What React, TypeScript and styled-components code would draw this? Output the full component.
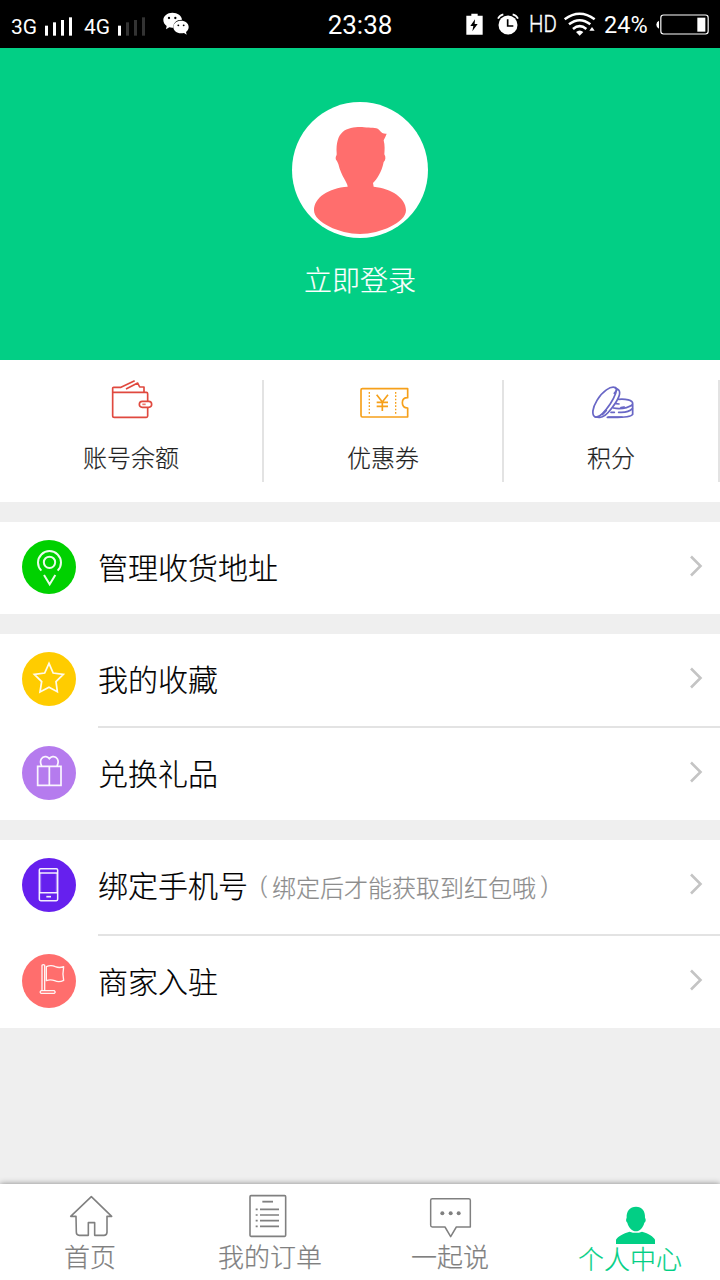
import React from 'react';
import styled, { createGlobalStyle } from 'styled-components';

const GlobalStyle = createGlobalStyle`
  *, *::before, *::after { box-sizing: border-box; }
  body {
    margin: 0;
    background: #efefef;
    font-family: 'Noto Sans CJK SC', 'Noto Sans', sans-serif;
    font-weight: 300;
    -webkit-text-stroke: 0.2px currentColor;
  }
  svg { display: block; flex: none; overflow: visible; }
`;

const Screen = styled.div`
  width: 720px;
  height: 1280px;
  display: flex;
  flex-direction: column;
  background: #efefef;
  overflow: hidden;
`;

/* status bar */
const StatusBar = styled.header`
  height: 48px;
  flex: none;
  display: grid;
  grid-template-columns: 1fr auto 1fr;
  align-items: center;
  padding: 0 11px;
  background: #000;
  color: #fff;
  font-family: Roboto, sans-serif;
  font-weight: 400;
  -webkit-text-stroke: 0;
`;

const StatusGroup = styled.div<{ $end?: boolean }>`
  display: flex;
  align-items: center;
  height: 48px;
  justify-content: ${(p) => (p.$end ? 'flex-end' : 'flex-start')};
`;

const StatusText = styled.span<{ $size: number; $width: number; $top?: number }>`
  flex: none;
  width: ${(p) => p.$width}px;
  font-size: ${(p) => p.$size}px;
  line-height: 48px;
  padding-top: ${(p) => p.$top ?? 0}px;
  white-space: nowrap;
`;

const HdMark = styled(StatusText)`
  font-weight: 300;
  -webkit-text-stroke: 0.4px #fff;
  transform: scaleX(0.85);
  transform-origin: left center;
`;

const SignalSlot = styled.span`
  width: 39px;
  padding-top: 4px;
`;

const IconSlot = styled.span<{ $before?: number; $after?: number }>`
  margin-left: ${(p) => p.$before ?? 0}px;
  margin-right: ${(p) => p.$after ?? 0}px;
`;

const Clock = styled.time`
  font-size: 26px;
  line-height: 45px;
  padding-top: 3px;
`;

/* profile header */
const Profile = styled.section`
  height: 312px;
  flex: none;
  display: flex;
  flex-direction: column;
  align-items: center;
  padding-top: 54px;
  background: #02cf85;
`;

const LoginLink = styled.span`
  margin-top: 21px;
  font-size: 28px;
  line-height: 40px;
  color: #fff;
`;

/* account summary */
const Stats = styled.section`
  height: 142px;
  flex: none;
  display: grid;
  grid-template-columns: 264px 240px 216px;
  padding: 20px 0;
  background: #fff;
`;

const Stat = styled.div`
  display: flex;
  flex-direction: column;
  align-items: center;
  border-right: 2px solid #e3e3e3;
  height: 102px;

  svg { margin-top: -2px; }
`;

const StatLabel = styled.span`
  margin-top: 19px;
  font-size: 24px;
  line-height: 36px;
  color: #222;
`;

/* menu */
const Group = styled.section`
  flex: none;
  margin-top: 20px;
  background: #fff;
`;

const Row = styled.div<{ $height?: number }>`
  height: ${(p) => p.$height ?? 92}px;
  display: flex;
  align-items: flex-start;
  padding: 18px 17px 0 22px;
`;

const Divider = styled.div`
  height: 2px;
  margin-left: 98px;
  background: #e3e3e3;
`;

const Label = styled.span`
  margin-left: 22px;
  font-size: 30px;
  line-height: 52px;
  color: #000;
`;

const Hint = styled.span`
  display: flex;
  font-size: 24px;
  line-height: 58px;
  color: #8c8c8c;
`;

const Paren = styled.span<{ $open?: boolean }>`
  width: 24px;
  padding: ${(p) => (p.$open ? '0 5px 0 0' : '0 0 0 5px')};
  text-align: ${(p) => (p.$open ? 'right' : 'left')};
  font-family: Roboto, sans-serif;
  font-size: 22px;
  line-height: 56px;
`;

const ChevronBox = styled.span`
  margin: 15px 0 0 auto;
`;

/* tab bar */
const TabBar = styled.nav`
  height: 96px;
  flex: none;
  margin-top: auto;
  display: grid;
  grid-template-columns: repeat(4, 180px);
  background: #fff;
  box-shadow: 0 0 6px rgba(0, 0, 0, 0.45);
`;

const Tab = styled.div<{ $active?: boolean }>`
  display: flex;
  flex-direction: column;
  align-items: center;
  padding-top: 9px;
  color: ${(p) => (p.$active ? '#02cf85' : '#808080')};
`;

const TabLabel = styled.span<{ $drop?: number }>`
  margin-top: ${(p) => -8 + (p.$drop ?? 0)}px;
  font-size: 26px;
  line-height: 38px;
`;

const Signal = ({ active }: { active: number }) => (
  <svg width="28" height="19" viewBox="0 0 84 57">
    {[30, 40, 47, 55].map((h, i) => (
      <rect key={h} x={i * 24} y={56 - h} width="9" height={h} fill={i < active ? '#fff' : '#333'} />
    ))}
  </svg>
);

const WeChat = () => (
  <svg width="26" height="24" viewBox="488 37 78 72">
    <path
      d="M516 39c-15 0-27 10-27 22 0 8 4 14 10 18l-2 10 10-6c4 1 8 2 12 1-1-14 9-24 26-24-1-12-13-21-29-21z"
      fill="#fff"
    />
    <path
      d="M542 63c-13 0-23 8-23 19s10 19 23 19c3 0 6 0 9-1l8 5-2-8c5-4 8-9 8-15 0-11-10-19-23-19z"
      fill="#fff"
    />
    <g fill="#000">
      <circle cx="506" cy="55" r="3.5" />
      <circle cx="525" cy="55" r="3.5" />
      <circle cx="534" cy="77" r="2.8" />
      <circle cx="550" cy="77" r="2.8" />
    </g>
  </svg>
);

const BatterySaver = () => (
  <svg width="17" height="22" viewBox="437 40 51 66">
    <path d="M438 48h15v-6h19v6h15v57h-49z" fill="#fff" />
    <path d="M464 59l-14 20h9l-3 16 16-22h-9z" fill="#000" />
  </svg>
);

const Alarm = () => (
  <svg width="22" height="22" viewBox="532 40 66 66">
    <circle cx="565" cy="76" r="28.5" fill="#fff" />
    <path d="M535 57q4-10 16-13M595 57q-4-10-16-13" fill="none" stroke="#fff" strokeWidth="5" />
    <path d="M564 59v20h17" fill="none" stroke="#000" strokeWidth="5" />
  </svg>
);

const Wifi = () => (
  <svg width="32" height="24" viewBox="733 34 96 72">
    <g fill="none" stroke="#fff" strokeWidth="7.5">
      <path d="M735 56q45-33 90 0" />
      <path d="M748 71q32-25 64 0" />
      <path d="M760 85q20-17 40 0" />
    </g>
    <path d="M769 94q11-9 22 0l-11 11z" fill="#fff" />
    <path d="M809 90l8-11 8 11z" fill="#fff" />
  </svg>
);

const Battery = () => (
  <svg width="53" height="21" viewBox="1007 40 159 63">
    <rect x="1021.5" y="43" width="142" height="57" rx="8" fill="none" stroke="#fff" strokeWidth="3.5" />
    <path d="M1016 60v24q-8-3-8-12t8-12z" fill="#fff" />
    <rect x="1131" y="51" width="24" height="42" fill="#fff" />
  </svg>
);

const Avatar = () => (
  <svg width="136" height="136" viewBox="36 36 408 408">
    <circle cx="240" cy="240" r="204" fill="#fff" />
    <path
      d="M203 290C203 278 184 260 175 222C172 212 167 211 167 204C167 198 171 197 170 190C168 160 174 138 188 126C205 112 235 110 252 112C272 114 288 112 297 119C304 129 312 132 320 131C317 139 313 146 311 151C315 166 314 181 313 193C318 201 317 211 311 216C305 248 290 268 279 279L281 290C334 296 378 323 378 361C378 397 302 432 240 432C178 432 102 397 102 361C102 322 146 294 203 290Z"
      fill="#ff6e6d"
    />
  </svg>
);

const Wallet = () => (
  <svg width="44" height="42" viewBox="117 54 132 126" fill="none" stroke="#e0493f" strokeWidth="5" strokeLinejoin="round">
    <path d="M233 124V101q0-4-4-4H128v70q0 5 5 5h96q4 0 4-4V143" />
    <path d="M128 97V84q0-2 3-2h22L194 62" />
    <path d="M168 87l35-18 6 12h13v16" />
    <rect x="208" y="124" width="37" height="18" rx="9" />
    <path d="M217 133h10" stroke="#ee7a70" />
  </svg>
);

const Ticket = () => (
  <svg width="54" height="42" viewBox="78 54 162 126" fill="none" stroke="#f6a01a" strokeWidth="5">
    <path d="M233 113V86H97q-4 0-4 4v76q0 5 4 5h136v-27q-16-1-16-16t16-15z" strokeLinejoin="round" />
    <path d="M118 96v70M197 96v70" strokeWidth="4" strokeDasharray="5 5" />
    <path d="M140 104l17 22 17-22M157 126v27M140 127h34M140 139h34" strokeWidth="5" />
  </svg>
);

const Coins = () => (
  <svg width="48" height="42" viewBox="771 54 144 126" fill="none" stroke="#6967c6" strokeWidth="5.2" strokeLinecap="round" strokeLinejoin="round">
    <path d="M796 171C784 166 787 144 801 121C817 94 842 77 856 83C864 87 855 110 841 131C826 153 808 174 796 171Z" />
    <path d="M856 83L866 90C876 101 861 124 845 145C830 165 817 174 807 172L796 171" />
    <path d="M853 100L860 91M829 151L817 164" />
    <path d="M866 118C887 116 908 121 908 130C908 140 878 149 850 144M908 131V163C903 172 870 173 832 172" />
    <path d="M907 146C899 155 881 158 866 157M843 157H853M873 143L882 141M835 171H876M858 131L867 132" />
  </svg>
);

const iconStroke = {
  fill: 'none',
  stroke: '#fff',
  strokeOpacity: 0.92,
  strokeWidth: 5.2,
} as const;

const PinIcon = () => (
  <svg width="54" height="54" viewBox="66 60 162 162">
    <circle cx="147" cy="141" r="81" fill="#00d100" />
    <g {...iconStroke}>
      <circle cx="148.5" cy="127" r="17" strokeWidth="6" />
      <path d="M124 152A34.5 34.5 0 1 1 173 152" strokeWidth="6" />
      <path d="M132 165l17 28 17-28" strokeWidth="6" />
    </g>
  </svg>
);

const StarIcon = () => (
  <svg width="54" height="54" viewBox="66 396 162 162">
    <circle cx="147" cy="477" r="81" fill="#ffcc00" />
    <path
      {...iconStroke}
      d="M147 430L159.5 459L190 463L168 485L172 515L147 502L120 516L125 485L103 463L134 459Z"
    />
  </svg>
);

const GiftIcon = () => (
  <svg width="54" height="54" viewBox="66 78 162 162">
    <circle cx="147" cy="159" r="81" fill="#b57bee" />
    <g {...iconStroke}>
      <path d="M113 139h70v57h-70zM148 139v57" />
      <path d="M125 138C116 120 127 108 138 110Q144 111 148 116Q152 111 158 110C169 108 180 120 171 138" />
    </g>
  </svg>
);

const PhoneIcon = () => (
  <svg width="54" height="54" viewBox="66 54 162 162">
    <circle cx="147" cy="135" r="81" fill="#6620ee" />
    <g {...iconStroke} strokeWidth="4.6">
      <rect x="118" y="86" width="55" height="96" rx="4" />
      <path d="M118 99h55M118 158h55" />
      <path d="M122 99v58M169 99v58" strokeWidth="3" strokeOpacity={0.45} />
      <path d="M139 170h14" strokeWidth="5" />
    </g>
  </svg>
);

const FlagIcon = () => (
  <svg width="54" height="54" viewBox="66 342 162 162">
    <circle cx="147" cy="423" r="81" fill="#ff6e6d" />
    <g {...iconStroke} strokeWidth="4" strokeLinejoin="round">
      <path d="M126 453V376q4-4 8 0v77" />
      <path d="M123 452h40q5 4 0 8h-40q-5-4 0-8z" />
      <path d="M139 380q14-6 27 0 12 5 25 0-4 21 0 41-14 7-27 1-13-5-25 0z" />
    </g>
  </svg>
);

const Chevron = () => (
  <svg width="14" height="22" viewBox="0 0 14 22" fill="none" stroke="#c4c4c4" strokeWidth="2.6">
    <path d="M2 1.5L11.5 11L2 20.5" />
  </svg>
);

const HomeIcon = () => (
  <svg width="48" height="52" viewBox="198 54 144 156" fill="none" stroke="#808080" strokeWidth="4.8" strokeLinejoin="round">
    <path d="M228 124H212L274 65L335 124H321V172q-1 9-9 9H284V143H265V181H238q-9 0-9-9z" />
  </svg>
);

const OrdersIcon = () => (
  <svg width="48" height="52" viewBox="738 54 144 156" fill="none" stroke="#808080" strokeWidth="4.8">
    <rect x="750" y="62" width="107" height="122" rx="3" />
    <path d="M787 80h32" strokeWidth="5.5" />
    <path d="M767 103h6M780 103h57M767 120h6M780 120h57M767 137h6M780 137h57M767 154h6M780 154h57" strokeWidth="5.2" />
  </svg>
);

const ChatIcon = () => (
  <svg width="48" height="52" viewBox="198 54 144 156" fill="none" stroke="#808080" strokeWidth="4.5" strokeLinejoin="round">
    <path d="M217 71H326q5 0 5 5V156H289L272 185L255 156H217q-5 0-5-5V76q0-5 5-5z" />
    <g fill="#808080" stroke="none">
      <circle cx="247" cy="115" r="6" />
      <circle cx="272" cy="115" r="6" />
      <circle cx="296" cy="115" r="6" />
    </g>
  </svg>
);

const PersonIcon = () => (
  <svg width="48" height="52" viewBox="738 54 144 156" fill="#02cf85">
    <path d="M828 95C846 95 856 108 855 128C859 133 857 141 853 143C849 159 839 169 828 169C817 169 806 159 802 143C798 140 797 134 800 128C799 108 810 95 828 95Z" />
    <path d="M809 170Q828 177 846 170C866 175 880 185 885 194V207H768V194C774 184 789 175 809 170Z" />
  </svg>
);

interface RowItemProps {
  icon: React.ReactNode;
  label: string;
  hint?: string;
  height?: number;
}

const RowItem = ({ icon, label, hint, height }: RowItemProps) => (
  <Row $height={height}>
    {icon}
    <Label>{label}</Label>
    {hint && (
      <Hint>
        <Paren $open>(</Paren>
        {hint}
        <Paren>)</Paren>
      </Hint>
    )}
    <ChevronBox>
      <Chevron />
    </ChevronBox>
  </Row>
);

export default function App() {
  return (
    <Screen>
      <GlobalStyle />
      <StatusBar>
        <StatusGroup>
          <StatusText $size={21} $width={34} $top={6}>3G</StatusText>
          <SignalSlot>
            <Signal active={4} />
          </SignalSlot>
          <StatusText $size={21} $width={34} $top={6}>4G</StatusText>
          <SignalSlot>
            <Signal active={1} />
          </SignalSlot>
          <IconSlot $before={6}>
            <WeChat />
          </IconSlot>
        </StatusGroup>
        <Clock>23:38</Clock>
        <StatusGroup $end>
          <BatterySaver />
          <IconSlot $before={14.5} $after={10}>
            <Alarm />
          </IconSlot>
          <HdMark $size={24} $width={35}>HD</HdMark>
          <IconSlot $after={8}>
            <Wifi />
          </IconSlot>
          <StatusText $size={23.5} $width={52} $top={1}>24%</StatusText>
          <Battery />
        </StatusGroup>
      </StatusBar>

      <Profile>
        <Avatar />
        <LoginLink>立即登录</LoginLink>
      </Profile>

      <Stats>
        <Stat>
          <Wallet />
          <StatLabel>账号余额</StatLabel>
        </Stat>
        <Stat>
          <Ticket />
          <StatLabel>优惠券</StatLabel>
        </Stat>
        <Stat>
          <Coins />
          <StatLabel>积分</StatLabel>
        </Stat>
      </Stats>

      <Group>
        <RowItem icon={<PinIcon />} label="管理收货地址" />
      </Group>
      <Group>
        <RowItem icon={<StarIcon />} label="我的收藏" />
        <Divider />
        <RowItem icon={<GiftIcon />} label="兑换礼品" />
      </Group>
      <Group>
        <RowItem icon={<PhoneIcon />} label="绑定手机号" hint="绑定后才能获取到红包哦" height={94} />
        <Divider />
        <RowItem icon={<FlagIcon />} label="商家入驻" />
      </Group>

      <TabBar>
        <Tab>
          <HomeIcon />
          <TabLabel>首页</TabLabel>
        </Tab>
        <Tab>
          <OrdersIcon />
          <TabLabel>我的订单</TabLabel>
        </Tab>
        <Tab>
          <ChatIcon />
          <TabLabel>一起说</TabLabel>
        </Tab>
        <Tab $active>
          <PersonIcon />
          <TabLabel $drop={2}>个人中心</TabLabel>
        </Tab>
      </TabBar>
    </Screen>
  );
}
